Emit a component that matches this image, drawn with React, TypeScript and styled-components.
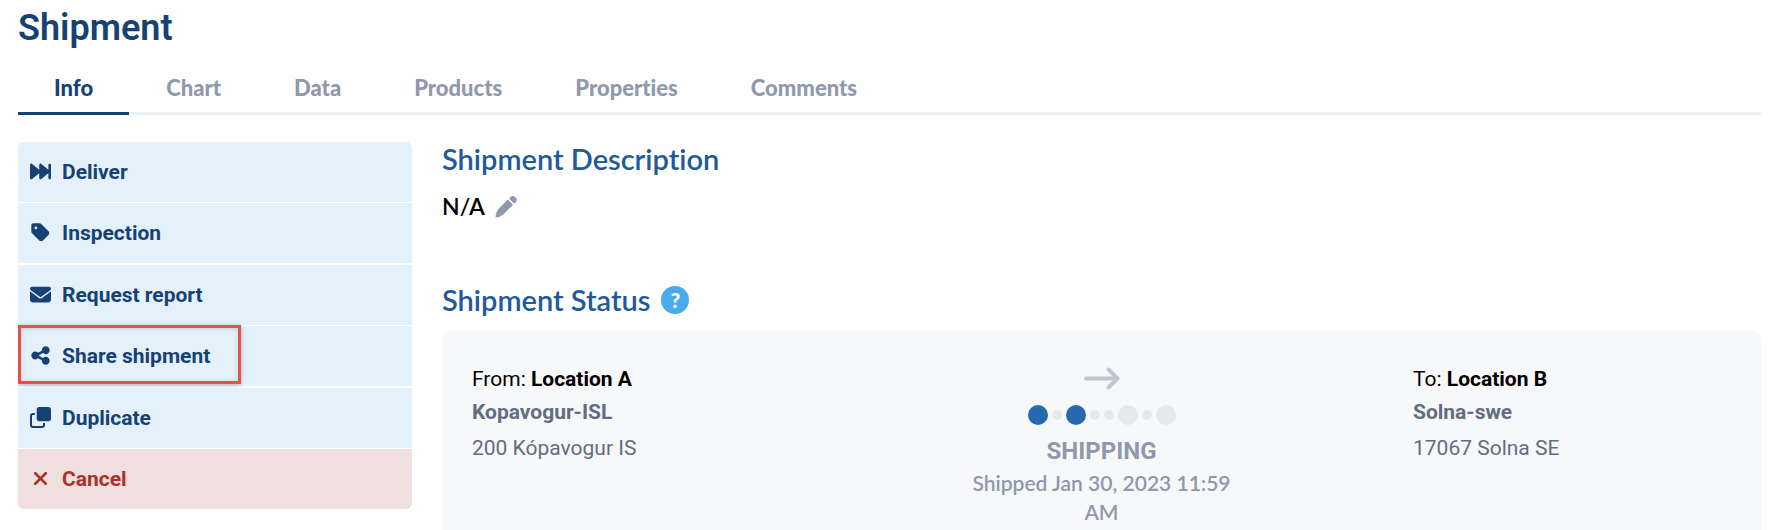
import React from "react";
import styled, { createGlobalStyle } from "styled-components";
import {
  FaForwardFast,
  FaTag,
  FaEnvelope,
  FaShareNodes,
  FaXmark,
} from "react-icons/fa6";

const navy = "#164273";
const blue = "#22599a";
const muted = "#8e99ab";
const slate = "#626d80";
const heading = `Lato, "Open Sans", sans-serif`;

const GlobalStyle = createGlobalStyle`
  *, *::before, *::after { box-sizing: border-box; }
  body {
    margin: 0;
    background: #fefefe;
    color: #000;
    font-family: Roboto, "Liberation Sans", sans-serif;
    font-size: 21px;
    line-height: 33px;
    font-variant-ligatures: none;
    overflow-x: hidden;
  }
  h1, h2, p { margin: 0; }
  button { font: inherit; border: 0; cursor: pointer; }
`;

const Page = styled.div`
  padding: 6px 21px 0 18px;
  height: 100vh;
  overflow: hidden;
`;

const Title = styled.h1`
  color: ${navy};
  font-size: 36px;
  font-weight: 600;
  line-height: 44px;
`;

const Tabs = styled.nav`
  display: flex;
  gap: 1px;
  margin-top: 14px;
  box-shadow: inset 0 -3px #eff0f2;
`;

const Tab = styled.button<{ $active?: boolean }>`
  padding: 9px 36px 10px;
  background: none;
  border-bottom: 3px solid ${(p) => (p.$active ? navy : "transparent")};
  color: ${(p) => (p.$active ? navy : muted)};
  font-family: ${heading};
  font-size: 22px;
  font-weight: 900;
  font-variant-ligatures: none;
  line-height: 29px;
`;

const Body = styled.div`
  display: grid;
  grid-template-columns: 394px minmax(0, 1fr);
  column-gap: 30px;
  margin-top: 27px;
`;

const Menu = styled.ul`
  margin: 0;
  padding: 0;
  list-style: none;
  align-self: start;
  border-radius: 6px;
  overflow: hidden;
`;

const MenuItem = styled.li`
  position: relative;
  &:not(:last-child) { margin-bottom: 1px; }
  &:nth-child(even):not(:last-child) { margin-bottom: 2px; }
`;

const Action = styled.button<{ $danger?: boolean }>`
  display: flex;
  align-items: center;
  gap: 10px;
  width: 100%;
  height: 60px;
  padding: 0 11px;
  background: ${(p) => (p.$danger ? "#efdfdf" : "#e4f1fb")};
  color: ${(p) => (p.$danger ? "#aa3226" : navy)};
  font-weight: 700;
  text-align: left;
`;

const IconSlot = styled.span`
  display: flex;
  justify-content: center;
  width: 23px;
  padding-bottom: 2px;
`;

const Highlight = styled.span`
  position: absolute;
  inset: -1px auto 2px 0;
  width: 223px;
  border: 3px solid #e8504a;
  box-shadow: 0 1px 5px rgba(0, 0, 0, 0.25), inset 0 1px 5px rgba(0, 0, 0, 0.15);
  pointer-events: none;
`;

const SectionTitle = styled.h2`
  display: flex;
  align-items: center;
  gap: 11px;
  color: ${blue};
  font-family: ${heading};
  font-size: 29px;
  font-weight: 600;
  line-height: 34px;
`;

const Description = styled.p`
  display: flex;
  align-items: center;
  gap: 10px;
  margin: 14px 0 60px;
  font-family: ${heading};
  font-size: 23px;
  font-weight: 600;
`;

const EditButton = styled.button`
  display: flex;
  padding: 0;
  background: none;
  color: ${muted};
`;

const HelpButton = styled.button`
  width: 28px;
  height: 28px;
  padding: 0;
  border-radius: 50%;
  background: #4aabec;
  color: #fff;
  font-family: ${heading};
  font-size: 21px;
  font-weight: 900;
  line-height: 28px;
`;

const StatusCard = styled.section`
  display: grid;
  grid-template-columns: 318px minmax(0, 1fr) 318px;
  min-height: 220px;
  margin-top: 14px;
  padding: 32px 30px 30px;
  border-radius: 9px;
  background: #f7f8fa;
`;

const Place = styled.div``;

const PlaceCode = styled.p`
  color: ${slate};
  font-weight: 700;
`;

const PlaceAddress = styled.p`
  margin-top: 3px;
  color: ${slate};
`;

const Progress = styled.div`
  display: flex;
  flex-direction: column;
  align-items: center;
  justify-self: center;
  max-width: 280px;
  padding-top: 4px;
  color: ${muted};
  text-align: center;
`;

const Dots = styled.div`
  display: flex;
  align-items: center;
  gap: 4px;
  margin-top: 15px;
`;

const Dot = styled.span<{ $large?: boolean; $done?: boolean }>`
  width: ${(p) => (p.$large ? 20 : 10)}px;
  height: ${(p) => (p.$large ? 20 : 10)}px;
  border-radius: 50%;
  background: ${(p) => (p.$done ? "#2768b0" : "#e6e8eb")};
`;

const Stage = styled.p`
  margin-top: 10px;
  font-size: 24px;
  font-weight: 700;
`;

const StageDate = styled.p`
  font-family: ${heading};
  font-size: 21px;
  font-weight: 600;
  line-height: 29px;
`;

const DuplicateIcon = ({ size }: { size: number }) => (
  <svg width={size} height={size} viewBox="0 0 21 21" aria-hidden="true">
    <rect x="6.7" y="0" width="14.3" height="14.2" rx="2.6" fill="currentColor" />
    <path
      d="M4.9 7H3A2 2 0 0 0 1 9V18A2 2 0 0 0 3 20H12A2 2 0 0 0 14 18V16"
      fill="none"
      stroke="currentColor"
      strokeWidth="2"
    />
  </svg>
);

const PencilIcon = () => (
  <svg width="22" height="22" viewBox="0 0 22 22" fill="currentColor" aria-hidden="true">
    <path d="M12.8 3.5 18 8.7 8.2 18.5Q5.5 21 0.5 21.5 0.6 16.2 3.2 13.2Z" />
    <path d="M14 2.4 15.2 1.4A3.7 3.7 0 0 1 20.5 6.6L19.3 7.7Z" />
  </svg>
);

const ArrowIcon = () => (
  <svg
    width="36"
    height="23"
    viewBox="0 0 36 23"
    fill="none"
    stroke="#c1c7d0"
    strokeWidth="4"
    strokeLinecap="round"
    strokeLinejoin="round"
    aria-hidden="true"
  >
    <path d="M2 11.5H33M24.5 2.5 33.5 11.5 24.5 20.5" />
  </svg>
);

type ActionDef = {
  label: string;
  icon: React.ComponentType<{ size: number }>;
  danger?: boolean;
  highlighted?: boolean;
};

const tabs = ["Info", "Chart", "Data", "Products", "Properties", "Comments"];

const actions: ActionDef[] = [
  { label: "Deliver", icon: FaForwardFast },
  { label: "Inspection", icon: FaTag },
  { label: "Request report", icon: FaEnvelope },
  { label: "Share shipment", icon: FaShareNodes, highlighted: true },
  { label: "Duplicate", icon: DuplicateIcon },
  { label: "Cancel", icon: FaXmark, danger: true },
];

const steps: { large?: boolean; done?: boolean }[] = [
  { large: true, done: true },
  {},
  { large: true, done: true },
  {},
  {},
  { large: true },
  {},
  { large: true },
];

export default function App() {
  return (
    <>
      <GlobalStyle />
      <Page>
        <Title>Shipment</Title>
        <Tabs>
          {tabs.map((t, i) => (
            <Tab key={t} type="button" $active={i === 0}>
              {t}
            </Tab>
          ))}
        </Tabs>
        <Body>
          <Menu>
            {actions.map(({ label, icon: Icon, danger, highlighted }) => (
              <MenuItem key={label}>
                <Action type="button" $danger={danger}>
                  <IconSlot>
                    <Icon size={21} />
                  </IconSlot>
                  {label}
                </Action>
                {highlighted && <Highlight />}
              </MenuItem>
            ))}
          </Menu>
          <main>
            <SectionTitle>Shipment Description</SectionTitle>
            <Description>
              N/A
              <EditButton type="button" aria-label="Edit description">
                <PencilIcon />
              </EditButton>
            </Description>
            <SectionTitle>
              Shipment Status
              <HelpButton type="button">?</HelpButton>
            </SectionTitle>
            <StatusCard>
              <Place>
                <p>
                  From: <b>Location A</b>
                </p>
                <PlaceCode>Kopavogur-ISL</PlaceCode>
                <PlaceAddress>200 Kópavogur IS</PlaceAddress>
              </Place>
              <Progress>
                <ArrowIcon />
                <Dots>
                  {steps.map((s, i) => (
                    <Dot key={i} $large={s.large} $done={s.done} />
                  ))}
                </Dots>
                <Stage>SHIPPING</Stage>
                <StageDate>Shipped Jan 30, 2023 11:59 AM</StageDate>
              </Progress>
              <Place>
                <p>
                  To: <b>Location B</b>
                </p>
                <PlaceCode>Solna-swe</PlaceCode>
                <PlaceAddress>17067 Solna SE</PlaceAddress>
              </Place>
            </StatusCard>
          </main>
        </Body>
      </Page>
    </>
  );
}
